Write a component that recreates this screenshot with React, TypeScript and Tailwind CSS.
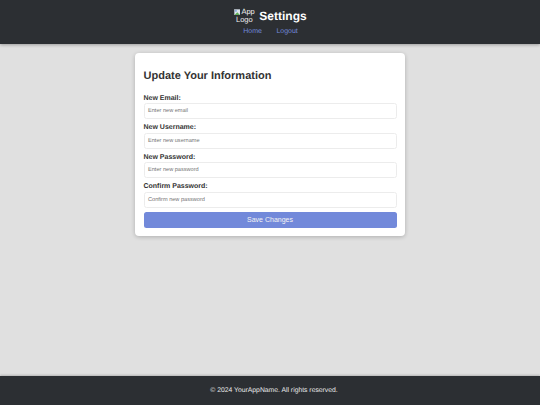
export default function App() {
  const fields = [
    ["New Email:", "Enter new email"],
    ["New Username:", "Enter new username"],
    ["New Password:", "Enter new password"],
    ["Confirm Password:", "Confirm new password"],
  ];
  return (
    <div className="h-[405px] w-[540px] flex flex-col overflow-hidden bg-[#e0e0e0] font-['Liberation_Sans',sans-serif] [text-rendering:geometricPrecision]">
      <header className="h-[44px] shrink-0 bg-[#2c2f33] shadow-[0_1px_3px_rgba(0,0,0,0.3)] flex flex-col items-center pt-[8px]">
        <div className="flex items-center gap-[4px] h-[16px]">
          <div className="w-[22px] text-center text-[7.5px] leading-[8px] text-[#f0f0f0]">
            <svg className="inline-block align-[-1px] mr-[1px]" width="6.5" height="6.5" viewBox="0 0 6 6">
              <rect x="0.25" y="0.25" width="5.5" height="5.5" fill="#dfe6ee" stroke="#9aa3ad" strokeWidth="0.5" />
              <path d="M0.5 5.5 L3 3 L5.5 5.5 Z" fill="#5fae57" />
              <rect x="1" y="1" width="1.5" height="1.5" fill="#7fa8dc" />
            </svg>
            App Logo
          </div>
          <h1 className="text-[12px] leading-[16px] font-bold text-white">Settings</h1>
        </div>
        <nav className="flex gap-[14.5px] mt-[4px] pl-[1px] text-[7px] leading-[8px] text-[#7289da]">
          <a>Home</a>
          <a>Logout</a>
        </nav>
      </header>
      <main className="flex-1 pt-[9px] flex justify-center items-start">
        <div className="w-[270px] h-[183px] bg-white rounded-[4px] shadow-[0_1px_4px_rgba(0,0,0,0.22)] px-[8.5px] pt-[16px]">
          <h2 className="text-[11px] leading-[14px] font-bold text-[#333333] mb-[10.5px]">Update Your Information</h2>
          {fields.map(([label, ph]) => (
            <div key={label} className="mb-[4.1px]">
              <div className="text-[7px] leading-[9px] font-bold text-[#333333] mb-[0.5px]">{label}</div>
              <div className="h-[16px] border border-[#ececec] rounded-[2.5px] pl-[3.5px] pt-[1px] flex items-center text-[5.6px] text-[#757575]">{ph}</div>
            </div>
          ))}
          <button className="block w-full h-[16px] mt-[3.5px] bg-[#7289da] rounded-[2.5px] text-[#f4f4f4] text-[7px] text-center">Save Changes</button>
        </div>
      </main>
      <footer className="h-[29px] shrink-0 bg-[#2c2f33] shadow-[0_-1px_2px_rgba(0,0,0,0.2)] flex items-center justify-center pl-[8px] pt-[1px] text-[6.8px] text-[#e8e8e8]">© 2024 YourAppName. All rights reserved.</footer>
    </div>
  );
}
